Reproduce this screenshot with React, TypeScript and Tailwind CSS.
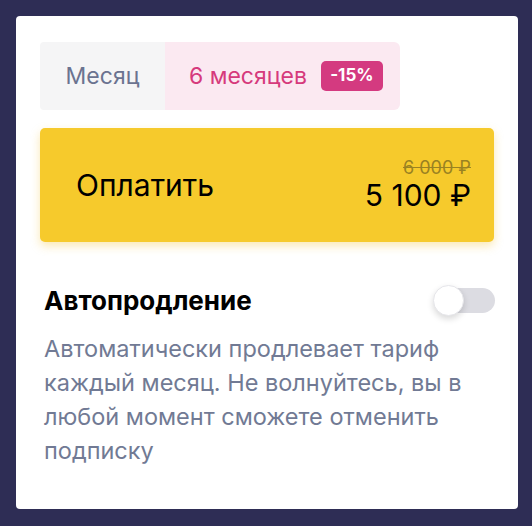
export default function App() {
  return (
    <div className="min-h-[526px] bg-[#2e2d55] pl-4 pr-[14px] pt-4 pb-[17px] font-['Inter',sans-serif]">
      <div className="rounded-[4px] bg-white px-6 pt-[26px] pb-[41px]">
        <div className="flex h-[68px] w-[360px]">
          <div className="flex w-[125px] items-center justify-center rounded-l-[4px] bg-[#f5f5f6] text-[23px] text-[#6b7390]">
            Месяц
          </div>
          <div className="flex flex-1 items-center gap-[14px] rounded-r-[6px] bg-[#fbe9f1] pl-6 text-[23px] text-[#d63a7c]">
            <span>6 месяцев</span>
            <span className="flex h-[30px] w-[62px] items-center justify-center rounded-[5px] bg-[#d43a80] text-[17px] font-bold text-white">
              -15%
            </span>
          </div>
        </div>

        <button className="mt-[18px] flex h-[114px] w-full items-center justify-between rounded-[5px] bg-[#f6ca2c] pl-9 pr-[23px] shadow-[0_4px_10px_rgba(240,190,40,0.35)]">
          <span className="text-[30px] text-black">Оплатить</span>
          <span className="flex flex-col items-end">
            <span className="text-[18px] leading-[20px] text-[#9a8222] line-through">6 000 ₽</span>
            <span className="text-[30px] leading-[34px] text-black">5 100 ₽</span>
          </span>
        </button>

        <div className="mt-[43px] flex h-[30px] items-center justify-between pl-1">
          <span className="text-[26px] font-bold text-black">Автопродление</span>
          <div className="relative mr-[-1px] h-[25px] w-[56px] rounded-full bg-[#dcdce2]">
            <span className="absolute left-[-6px] top-[-3px] h-[31px] w-[31px] rounded-full border border-[#e6e6ea] bg-white shadow-[0_3px_6px_rgba(0,0,0,0.15)]" />
          </div>
        </div>

        <p className="mt-[17px] pl-1 text-[23.5px] leading-[34px] text-[#717a94]">
          Автоматически продлевает тариф каждый месяц. Не волнуйтесь, вы в любой момент сможете отменить подписку
        </p>
      </div>
    </div>
  )
}
